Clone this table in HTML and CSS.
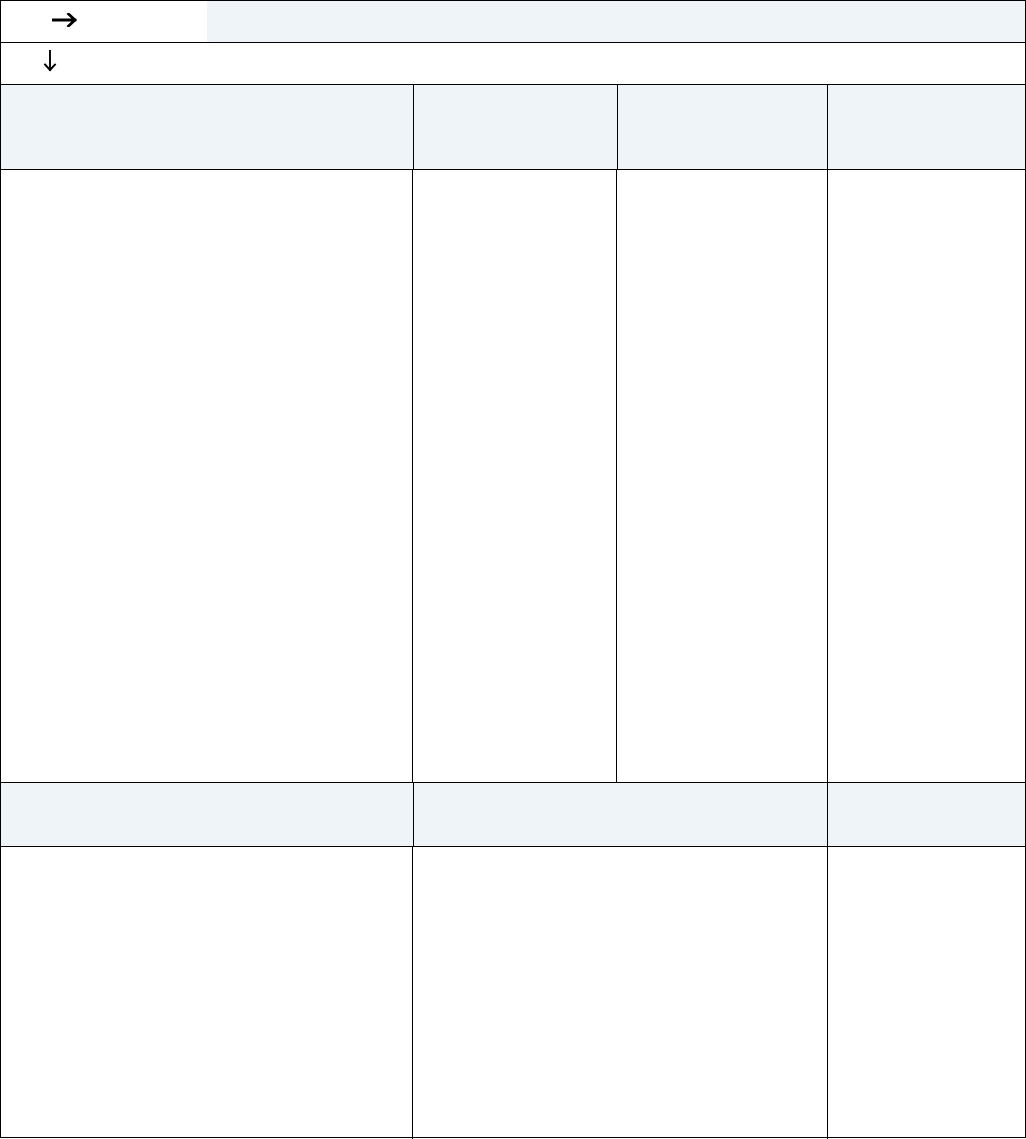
FILE: index.html
```html
<!DOCTYPE html>
<html lang="en">
<head>
<meta charset="utf-8">
<title>Sheet</title>
<link rel="stylesheet" href="styles.css">
</head>
<body>
<div class="sheet">
  <div class="row row-a">
    <div class="cell a1">
      <svg class="arrow-right" width="26" height="14" viewBox="0 0 26 14" aria-hidden="true">
        <path d="M1 7 H23 M16.5 1 L23 7 L16.5 13" fill="none" stroke="#000" stroke-width="2.8" stroke-linecap="square" stroke-linejoin="miter"/>
      </svg>
    </div>
    <div class="cell a2"></div>
  </div>
  <div class="row row-b">
    <div class="cell b1">
      <svg class="arrow-down" width="14" height="22" viewBox="0 0 14 22" aria-hidden="true">
        <path d="M7 1 V20 M2 14.5 L7 20 L12 14.5" fill="none" stroke="#000" stroke-width="1.9" stroke-linecap="square"/>
      </svg>
    </div>
  </div>
  <div class="row row-c head">
    <div class="cell c1"></div>
    <div class="cell c2"></div>
    <div class="cell c3"></div>
    <div class="cell c4"></div>
  </div>
  <div class="row row-d">
    <div class="cell d1"></div>
    <div class="cell d2"></div>
    <div class="cell d3"></div>
    <div class="cell d4"></div>
  </div>
  <div class="row row-e head">
    <div class="cell e1"></div>
    <div class="cell e2"></div>
    <div class="cell e3"></div>
  </div>
  <div class="row row-f">
    <div class="cell f1"></div>
    <div class="cell f2"></div>
    <div class="cell f3"></div>
  </div>
</div>
<div class="tail">
  <div class="cell g1"></div>
  <div class="cell g2"></div>
</div>
</body>
</html>
```

FILE: styles.css
```css
html, body {
  margin: 0;
  padding: 0;
  background: #fff;
  font-family: "Liberation Sans", Arial, sans-serif;
}

.sheet {
  width: 1024px;
  border-left: 1px solid #000;
  border-right: 1px solid #000;
  border-top: 1px solid #000;
}

.row {
  display: grid;
  border-bottom: 1px solid #000;
}

.head { background: #eff4f9; }

.cell { min-width: 0; }

/* Row A */
.row-a {
  height: 41px;
  grid-template-columns: 206px 1fr;
}
.a1 {
  background: #fff;
  padding: 12px 0 0 51px;
}
.a2 { background: #eff4f9; }
.arrow-right { display: block; }

/* Row B */
.row-b {
  height: 41px;
  grid-template-columns: 1fr;
}
.b1 { padding: 7px 0 0 42px; }
.arrow-down { display: block; }

/* Header row C */
.row-c {
  height: 84px;
  grid-template-columns: 413px 204px 210px 1fr;
}
.row-c .cell:not(:last-child) { border-right: 1px solid #000; }

/* Body row D */
.row-d {
  height: 612px;
  grid-template-columns: 412px 204px 211px 1fr;
}
.row-d .cell:not(:last-child) { border-right: 1px solid #000; }

/* Header row E */
.row-e {
  height: 63px;
  grid-template-columns: 413px 414px 1fr;
}
.row-e .cell:not(:last-child) { border-right: 1px solid #000; }

/* Body row F */
.row-f {
  height: 290px;
  grid-template-columns: 412px 415px 1fr;
}
.row-f .cell:not(:last-child) { border-right: 1px solid #000; }

/* Continuation below */
.tail {
  display: grid;
  grid-template-columns: 413px 415px;
  height: 4px;
}
.tail .cell { border-right: 1px solid #000; }
```
